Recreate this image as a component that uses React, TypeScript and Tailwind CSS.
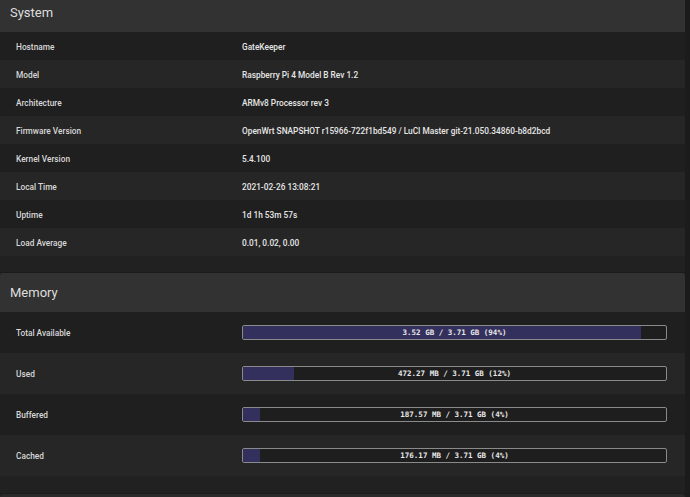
import React from "react";

const sys: [string, string][] = [
  ["Hostname", "GateKeeper"],
  ["Model", "Raspberry Pi 4 Model B Rev 1.2"],
  ["Architecture", "ARMv8 Processor rev 3"],
  ["Firmware Version", "OpenWrt SNAPSHOT r15966-722f1bd549 / LuCI Master git-21.050.34860-b8d2bcd"],
  ["Kernel Version", "5.4.100"],
  ["Local Time", "2021-02-26 13:08:21"],
  ["Uptime", "1d 1h 53m 57s"],
  ["Load Average", "0.01, 0.02, 0.00"],
];

const mem: [string, string, number][] = [
  ["Total Available", "3.52 GB / 3.71 GB (94%)", 94],
  ["Used", "472.27 MB / 3.71 GB (12%)", 12],
  ["Buffered", "187.57 MB / 3.71 GB (4%)", 4],
  ["Cached", "176.17 MB / 3.71 GB (4%)", 4],
];

function Header({ title }: { title: string }) {
  return (
    <div className="h-[39px] flex items-center pl-[10px] bg-[#323232] rounded-t-[3px] text-[13px] text-[#dedede]">
      {title}
    </div>
  );
}

export default function App() {
  return (
    <div
      className="w-[690px] h-[497px] overflow-hidden bg-[#1b1b1b] pr-[5px]"
      style={{ fontFamily: "Roboto, 'Noto Sans', sans-serif" }}
    >
      <div className="mt-[-7px] flex flex-col gap-[1px]">
        <div className="bg-[#212121] pb-[16px]">
          <Header title="System" />
          {sys.map(([k, v], i) => (
            <div
              key={k}
              className={`h-[28px] flex items-center pt-[2px] text-[8.3px] font-medium ${i % 2 === 0 ? "bg-[#1f1f1f]" : "bg-[#262626]"}`}
            >
              <div className="w-[242px] pl-[16px] text-[#d8d8d8]">{k}</div>
              <div className="text-[#e6e6e6]">{v}</div>
            </div>
          ))}
        </div>
        <div className="bg-[#212121] pb-[17px]">
          <Header title="Memory" />
          {mem.map(([k, v, p], i) => (
            <div
              key={k}
              className={`h-[41px] flex items-center text-[8.3px] font-medium ${i % 2 === 0 ? "bg-[#1f1f1f]" : "bg-[#262626]"}`}
            >
              <div className="w-[242px] pl-[16px] pt-[1px] text-[#d8d8d8]">{k}</div>
              <div className="relative w-[425px] h-[15px] border border-[#8a8a8a] rounded-[2px] bg-[#1e1e1e] overflow-hidden">
                <div className="h-full bg-[#34305e]" style={{ width: `${p}%` }} />
                <div
                  className="absolute inset-0 flex items-center justify-center text-[7.5px] font-bold text-[#e8e8e8]"
                  style={{ fontFamily: "'DejaVu Sans Mono', monospace" }}
                >
                  {v}
                </div>
              </div>
            </div>
          ))}
        </div>
        <div className="bg-[#2a2a2a] h-[20px] rounded-t-[3px]" />
      </div>
    </div>
  );
}
